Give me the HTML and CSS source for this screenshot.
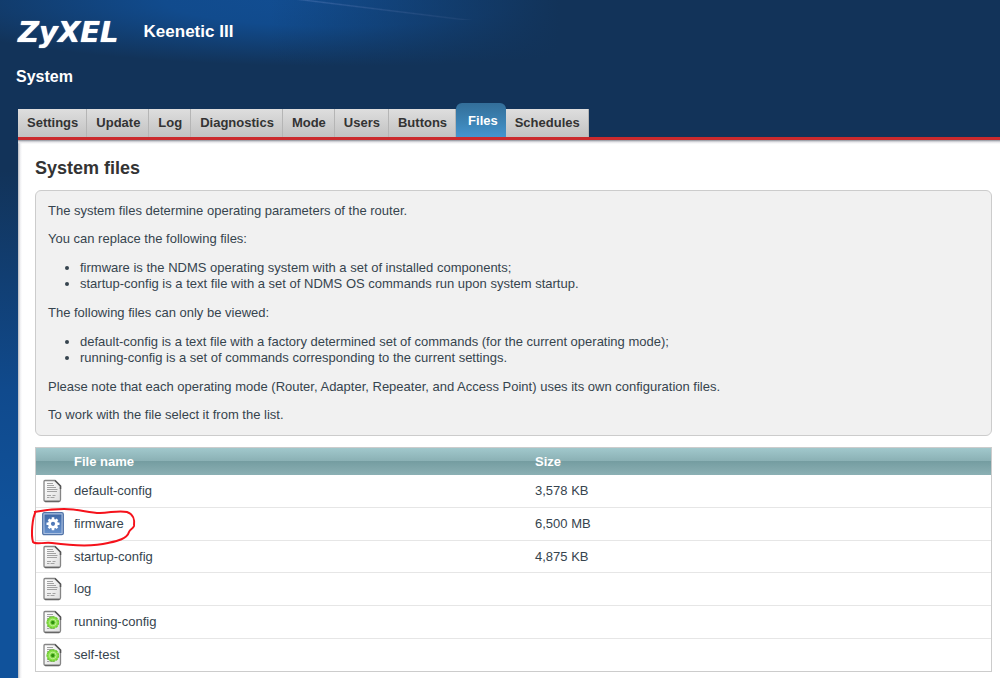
FILE: index.html
```
<!DOCTYPE html>
<html lang="en">
<head>
<meta charset="utf-8">
<title>Keenetic III - System files</title>
<link rel="stylesheet" href="styles.css">
</head>
<body>
<svg class="defs" width="0" height="0" aria-hidden="true">
  <defs>
    <linearGradient id="paper" x1="0" y1="0" x2="1" y2="1"><stop offset="0" stop-color="#fff"/><stop offset="1" stop-color="#dedede"/></linearGradient>
    <linearGradient id="blue" x1="0" y1="0" x2="0" y2="1"><stop offset="0" stop-color="#3f68a6"/><stop offset="1" stop-color="#6690cb"/></linearGradient>
    <symbol id="doc" viewBox="0 0 22 24">
      <path d="M3 1.500h10l5.500 5.500v13.800q0 1.700-1.700 1.700H3.700Q2 22.500 2 20.800V2.500q0-1 1-1z" fill="url(#paper)" stroke="#858585" stroke-width="1.300"/>
      <path d="M13 1.500l5.500 5.500v3" fill="none" stroke="#555" stroke-width="1.500"/>
      <path d="M3 22.400h14.500" stroke="#666" stroke-width="1.400"/>
      <path d="M5 4.500h6M5 6.500h7M5 8.500h9M5 10.500h10.500M5 12.500h10M5 16.500h4M10.500 16.500h3M5 18.500h2.500M8.500 18.500h4" stroke="#a2a2a2" stroke-width="1"/>
    </symbol>
    <symbol id="doc-live" viewBox="0 0 22 24">
      <use href="#doc"/>
      <circle cx="10.800" cy="12.500" r="5.700" fill="#8be04c" stroke="#6bcb2d" stroke-width="1.300" stroke-dasharray="2.600 .6"/>
      <circle cx="10.800" cy="12.500" r="3.300" fill="#7bd440" stroke="#c0f295" stroke-width="1"/>
      <circle cx="10.800" cy="12.500" r="1.700" fill="#2f900f"/>
    </symbol>
    <symbol id="firmware" viewBox="0 0 22 24">
      <rect x=".7" y=".7" width="20.600" height="22" rx="1.500" fill="#a9bfe0" stroke="#5274a8" stroke-width="1.300"/>
      <rect x="2.500" y="2.500" width="17" height="18.500" fill="url(#blue)"/>
      <path d="M11 5.300v13M4.500 11.800h13M6.600 7.400l8.800 8.800M15.400 7.400l-8.800 8.800" stroke="#fff" stroke-width="2.600"/>
      <circle cx="11" cy="11.800" r="3.500" fill="none" stroke="#fff" stroke-width="2.800"/>
      <circle cx="11" cy="11.800" r="2.100" fill="#5079b8"/>
    </symbol>
  </defs>
</svg>

<header class="header">
  <div class="brand">
    <span class="logo">ZyXEL</span>
    <span class="model">Keenetic III</span>
  </div>
  <h1 class="section">System</h1>
</header>

<nav class="tabs" aria-label="System">
  <a class="tab" href="#settings">Settings</a>
  <a class="tab" href="#update">Update</a>
  <a class="tab" href="#log">Log</a>
  <a class="tab" href="#diagnostics">Diagnostics</a>
  <a class="tab" href="#mode">Mode</a>
  <a class="tab" href="#users">Users</a>
  <a class="tab" href="#buttons">Buttons</a>
  <a class="tab tab-active" href="#files" aria-current="page">Files</a>
  <a class="tab" href="#schedules">Schedules</a>
</nav>

<main class="content">
  <h2 class="title">System files</h2>
  <section class="info">
    <p>The system files determine operating parameters of the router.</p>
    <p>You can replace the following files:</p>
    <ul>
      <li>firmware is the NDMS operating system with a set of installed components;</li>
      <li>startup-config is a text file with a set of NDMS OS commands run upon system startup.</li>
    </ul>
    <p>The following files can only be viewed:</p>
    <ul>
      <li>default-config is a text file with a factory determined set of commands (for the current operating mode);</li>
      <li>running-config is a set of commands corresponding to the current settings.</li>
    </ul>
    <p>Please note that each operating mode (Router, Adapter, Repeater, and Access Point) uses its own configuration files.</p>
    <p>To work with the file select it from the list.</p>
  </section>

  <table class="files">
    <thead>
      <tr><th class="icon-col"></th><th class="name-col">File name</th><th>Size</th></tr>
    </thead>
    <tbody>
      <tr><td><svg class="icon"><use href="#doc"/></svg></td><td>default-config</td><td>3,578 KB</td></tr>
      <tr>
        <td class="marked">
          <svg class="icon"><use href="#firmware"/></svg>
          <svg class="marker" viewBox="0 0 108 42" aria-hidden="true"><path d="M4 5C14 3 24 2 34 2C50 2 58 6 70 6C80 6 88 3 97 5C103 7 105 13 104 19C103 22 100 22 99 25C97 32 87 34 78 36C62 40 37 38 22 36C13 35 6 38 3 35C1 28 2 11 6 4"/></svg>
        </td>
        <td>firmware</td><td>6,500 MB</td>
      </tr>
      <tr><td><svg class="icon"><use href="#doc"/></svg></td><td>startup-config</td><td>4,875 KB</td></tr>
      <tr><td><svg class="icon"><use href="#doc"/></svg></td><td>log</td><td></td></tr>
      <tr><td><svg class="icon"><use href="#doc-live"/></svg></td><td>running-config</td><td></td></tr>
      <tr><td><svg class="icon"><use href="#doc-live"/></svg></td><td>self-test</td><td></td></tr>
    </tbody>
  </table>
</main>
</body>
</html>
```
FILE: styles.css
```
* { box-sizing: border-box; }

html { height: 100%; }

body {
  display: flex;
  flex-direction: column;
  min-height: 100%;
  margin: 0;
  padding-left: 18px;
  font: 13px/16px "Liberation Sans", Arial, sans-serif;
  color: #36444e;
  background:
    linear-gradient(90deg, transparent 270px, #123359 560px) 0 0 / 100% 72px no-repeat,
    linear-gradient(7deg, transparent 47%, rgba(120, 150, 215, .35) 50%, transparent 53%) 290px 0 / 190px 20px no-repeat,
    radial-gradient(ellipse 440px 66px at 340px 0, #124e93 0%, #114b8d 40%, rgba(17, 75, 141, 0) 100%) no-repeat,
    linear-gradient(#123359 0, #123359 170px, #104a8d 390px, #10529b 520px, #10529b 100%);
}

.defs { position: absolute; }

.header { height: 108px; color: #fff; }

.brand {
  display: flex;
  align-items: center;
  gap: 25px;
  height: 64px;
}

.logo {
  font: italic bold 29px/32px "DejaVu Sans", sans-serif;
  text-shadow: 0 0 1px #fff;
}

.model { font-size: 17px; line-height: 20px; font-weight: bold; }

.section {
  margin: 4px 0 0 -2px;
  font-size: 16px;
  line-height: 18px;
}

.tabs {
  display: flex;
  align-items: flex-end;
  height: 29px;
}

.tab {
  height: 28px;
  padding: 0 8px 0 9px;
  border-right: 1px solid #b5b5b5;
  font-size: 13px;
  font-weight: bold;
  line-height: 28px;
  color: #333;
  text-decoration: none;
  background: linear-gradient(#dedede, #c2c2c2);
}

.tab-active {
  height: 34px;
  padding: 0 8px 0 12px;
  border-right: 0;
  border-radius: 6px 6px 0 0;
  line-height: 35px;
  color: #fff;
  background: linear-gradient(#336e99, #3c83b4 55%, #4595cf);
}

.content {
  flex: 1;
  padding: 18px 8px 7px 17px;
  border-top: 3px solid #cb2a2d;
  background:
    linear-gradient(#8b8f98, #e4e4e8 2px, transparent 4px),
    linear-gradient(90deg, #b4b8c0, #ededf0 2px, transparent 4px),
    #fff;
}

.title {
  margin: 0 0 12px;
  font-size: 18px;
  line-height: 20px;
  color: #333;
}

.info {
  padding: 12px;
  border: 1px solid #ccc;
  border-radius: 6px;
  background: #f1f1f1;
}

.info p { margin: 12px 0; }
.info ul { margin: 13px 0; padding-left: 32px; }
.info p:first-child { margin-top: 0; }
.info p:last-child { margin-bottom: 0; }

.files {
  width: 100%;
  margin-top: 11px;
  border: 1px solid #ccc;
  border-collapse: separate;
  border-spacing: 0;
  table-layout: fixed;
}

.files th {
  height: 27px;
  padding: 0;
  text-align: left;
  color: #fff;
  background: linear-gradient(#a1c8cc, #8ab0b4 49%, #759da1 50%, #8bb0b4);
}

.files td {
  height: 33px;
  padding: 0;
  border-bottom: 1px solid #e6e6e6;
}

.files tr:nth-child(3n) td { height: 32px; }
.files tr:last-child td { border-bottom: 0; }

.icon-col { width: 38px; }
.name-col { width: 461px; }

.icon {
  display: block;
  width: 22px;
  height: 24px;
  margin-left: 6px;
}

.marked { position: relative; }

.marker {
  position: absolute;
  top: -1px;
  left: -6px;
  width: 108px;
  height: 42px;
  fill: none;
  stroke: #f5121b;
  stroke-width: 2;
}
```
